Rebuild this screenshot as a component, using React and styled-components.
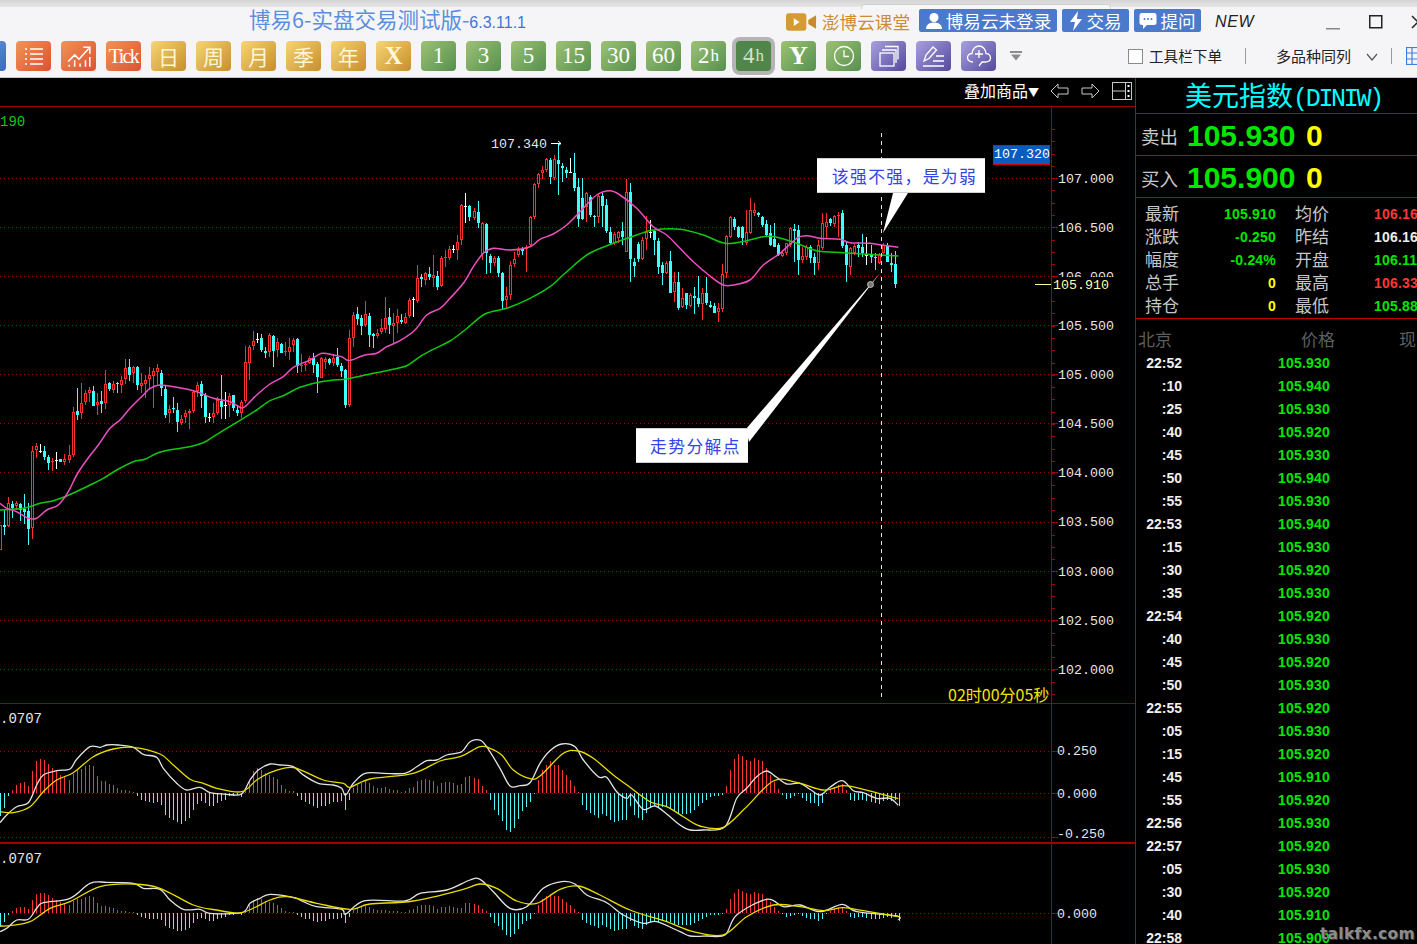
import React from "react";
import styled, { createGlobalStyle } from "styled-components";

const GlobalStyle = createGlobalStyle`
  html, body { margin: 0; padding: 0; background: #000; overflow: hidden; }
  * { box-sizing: border-box; }
`;

const CJK = `"Noto Sans CJK SC", "Liberation Sans", sans-serif`;
const MONO = `"Liberation Mono", "Noto Sans CJK SC", monospace`;
const SANS = `"Liberation Sans", "Noto Sans CJK SC", sans-serif`;
const SERIF = `"Liberation Serif", "Noto Sans CJK SC", serif`;

/* candles read off the chart: [kind, bodyTop, bodyBottom, high, low], kind 0 up, 1 down, 2 doji.
   y values are 3x zoom units, screen y = 130 + v / 3 */
const CANDLES = [
  [0,1185,1260,1185,1260],[1,1185,1190,1140,1215],[0,1120,1188,1100,1190],[1,1122,1135,1112,1165],[0,1118,1128,1112,1140],[1,1122,1140,1118,1172],[1,1136,1146,1092,1182],[1,1142,1196,1120,1244],[0,962,1195,948,1228],[0,948,960,938,985],
  [2,962,963,942,968],[1,964,980,948,990],[1,982,998,975,1020],[0,992,994,985,1022],[2,990,991,966,1016],[1,987,995,987,995],[0,988,996,972,1006],[0,975,990,945,998],[0,847,974,830,980],[1,843,855,775,870],
  [0,820,850,760,868],[0,790,815,780,825],[0,780,788,770,815],[1,783,827,768,828],[0,816,826,790,855],[1,812,822,782,850],[0,762,818,720,838],[1,760,776,757,782],[0,762,780,752,790],[1,760,762,757,790],
  [0,750,765,738,788],[0,714,746,686,762],[1,711,735,687,752],[0,712,730,708,760],[1,711,765,708,780],[0,760,768,730,790],[0,750,762,735,805],[0,735,746,710,780],[0,724,738,715,835],[0,714,726,703,765],
  [1,728,773,720,798],[1,777,855,765,863],[0,838,850,825,878],[1,835,837,800,850],[1,840,875,820,905],[0,868,878,855,885],[0,848,860,840,880],[0,843,848,838,898],[0,785,842,780,848],[0,766,782,755,800],
  [1,762,798,753,835],[1,795,860,790,880],[2,860,861,850,876],[0,848,862,820,878],[0,810,848,800,855],[1,812,830,735,868],[2,826,827,785,868],[0,798,825,790,860],[1,796,835,794,842],[1,840,850,825,858],
  [0,817,850,810,865],[0,697,812,648,818],[0,652,700,645,750],[0,633,647,603,660],[2,628,629,608,640],[1,625,660,612,665],[1,663,668,650,683],[0,616,665,610,680],[1,618,662,615,710],[0,637,660,625,680],
  [1,642,668,638,670],[0,664,666,636,678],[0,650,665,625,690],[0,630,645,625,665],[1,627,708,625,728],[0,705,708,672,725],[0,702,706,695,722],[0,685,700,678,702],[1,684,704,670,728],[1,702,742,695,788],
  [0,685,743,680,745],[0,687,695,680,718],[1,687,700,685,705],[0,685,700,672,708],[1,680,706,655,710],[1,708,722,700,740],[1,720,826,718,833],[0,625,826,600,830],[0,555,623,545,650],[1,552,567,532,585],
  [1,565,587,555,615],[0,552,585,513,590],[1,558,615,550,650],[1,612,618,608,653],[0,610,617,598,625],[0,595,606,568,612],[0,565,596,502,610],[1,561,585,533,612],[0,580,587,548,640],[0,558,580,537,608],
  [1,570,576,552,582],[0,562,578,548,582],[0,510,557,505,565],[2,508,509,502,562],[0,445,513,405,518],[1,440,446,433,470],[0,430,450,425,465],[1,433,441,410,450],[0,435,443,375,470],[1,438,470,423,480],
  [0,384,467,378,470],[0,380,382,360,410],[0,358,385,348,390],
  [2,358,359,345,370],[0,335,360,315,390],[0,225,330,222,345],[2,228,229,188,280],[1,228,262,226,272],[0,243,263,235,270],[1,246,278,213,295],[0,278,372,275,390],[1,282,370,280,432],[1,378,398,372,430],
  [0,385,398,378,408],[1,385,428,378,440],[1,428,512,425,540],[0,498,510,470,535],[0,405,495,393,510],[0,388,402,365,410],[0,360,375,350,380],[1,358,362,352,375],[0,350,358,345,425],[0,260,345,258,350],
  [0,162,262,160,268],[0,132,163,128,175],[0,120,130,108,148],[0,87,120,83,125],[1,90,142,85,163],[0,88,143,75,150],[1,90,103,38,195],[1,107,115,100,155],[1,120,128,112,145],[2,127,128,85,128],
  [1,130,175,70,182],[1,170,268,145,290],[1,205,268,145,270],[0,190,230,185,275],[1,202,255,195,260],[1,258,262,255,290],[0,197,260,190,280],[1,197,228,190,290],[1,225,302,208,310],[1,305,340,290,345],
  [0,313,340,305,345],[0,305,325,302,340],[1,302,320,275,345],[0,185,365,148,365],[1,187,388,160,455],[1,395,408,385,442],[1,343,388,335,395],[0,330,388,320,390],[0,305,328,258,360],[2,305,306,270,325],
  [1,303,330,300,375],[1,332,412,325,432],[1,405,430,395,465],[0,398,430,392,432],[1,393,488,362,490],[0,455,485,425,515],[1,456,535,425,540],[0,505,530,475,535],[1,490,525,488,538],[0,495,527,490,530],
  [1,497,505,470,552],[1,505,522,438,530],[0,490,522,475,570],[1,490,518,440,525],[1,525,530,512,535],[1,528,548,520,550],[0,535,545,518,575],[0,432,538,403,545],[0,318,430,315,445],[0,262,320,258,325],
  [1,268,292,262,300],[1,292,322,288,325],[1,290,325,288,345],[0,305,340,240,345],[0,240,310,205,312],[0,240,250,218,258],[1,250,255,245,262],[1,262,285,258,290],[1,282,315,270,318],[1,310,345,285,348],
  [1,328,350,280,352],[1,345,375,340,378],[0,368,378,360,382],[0,340,370,338,375],[0,295,345,290,350],[1,298,302,282,395],[1,300,390,285,435],[0,378,390,350,400],[0,350,380,345,390],[1,350,385,345,398],
  [1,382,400,370,435],[0,345,400,330,420],[0,280,355,250,360],[0,275,290,250,325],[1,268,280,265,288],[0,258,283,255,290],[0,255,258,245,320],[1,248,348,240,355],[1,345,405,335,455],[0,355,412,350,435],
  [0,348,368,342,375],[1,345,355,335,380],[1,350,368,312,380],[2,372,378,322,405],[1,375,380,345,400],[1,382,385,370,420],[0,372,400,370,402],[0,345,370,340,372],[1,348,395,340,395],[1,400,405,370,425],[1,402,462,362,473],
];

const scaleY = (v) => 130 + v / 3;

const PINK = [
  [0,[[0,1120],[20,1135],[50,1145],[85,1165],[110,1165],[140,1140],[175,1125],[205,1085],[230,1035],[260,990],[295,945],[330,895],[360,870],[390,835],[430,795],[450,775],[480,765],[530,772],[590,785],[640,805],[690,815],[720,832],[735,830],[770,795],[810,762],[850,740],[880,712],[930,690],[965,670],[1000,675],[1025,680],[1040,690],[1055,690],[1095,675],[1130,670],[1160,650],[1200,632],[1245,600],[1280,555],[1320,535],[1350,505]]],
  [450,[[40,460],[70,410],[100,370],[130,355],[180,360],[240,350],[270,328],[310,312],[350,285],[395,240],[440,195],[480,182],[510,195],[560,235],[610,290],[650,315],[690,355],[730,395],[780,438],[820,465],[850,465],[900,450],[940,405],[990,370],[1040,325],[1070,317],[1110,325],[1170,328],[1200,338],[1260,340],[1300,346],[1345,352]]],
];
const GREEN = [
  [0,[[0,1140],[70,1135],[120,1120],[160,1112],[200,1098],[260,1070],[310,1045],[350,1020],[400,995],[435,988],[475,968],[520,958],[560,952],[610,938],[640,920],[680,895],[730,865],[770,840],[810,812],[850,797],[900,772],[950,758],[1000,750],[1040,747],[1120,730],[1160,722],[1220,707],[1260,680],[1300,658],[1350,633]]],
  [450,[[45,600],[105,552],[170,535],[240,505],[300,470],[350,425],[415,372],[490,340],[560,315],[610,300],[690,298],[760,315],[825,340],[890,332],[940,320],[975,320],[1040,340],[1100,362],[1180,368],[1240,372],[1345,378]]],
];
const HIST = [
  -70,-45,-8,8,25,30,32,20,65,95,102,100,88,75,65,55,52,40,58,68,72,80,85,82,50,35,35,28,25,15,10,10,6,4,-10,-20,-25,-28,-30,-28,-35,-65,-75,-80,-88,-92,-85,-75,-52,-32,-25,-30,-38,-38,-30,-25,-20,-10,-8,-6,-12,5,40,65,75,70,60,55,48,42,25,12,6,6,-8,-22,-28,-32,-40,-45,-40,-38,-32,-28,-28,-25,-50,-20,15,25,30,35,30,22,15,15,17,12,10,10,4,5,15,18,35,38,42,38,35,22,30,32,33,30,25,27,48,52,45,42,
  22,8,-20,-50,-65,-85,-110,-118,-105,-78,-55,-42,-28,-2,38,68,85,95,85,85,70,55,38,22,2,-35,-50,-60,-65,-75,-62,-68,-80,-88,-85,-80,-80,-40,-65,-75,-80,-60,-45,-40,-45,-42,-40,-45,-55,-60,-62,-62,-60,-50,-38,-30,-20,-12,-10,-10,-6,22,68,102,118,112,100,97,105,100,95,75,55,32,12,-5,-18,-15,-8,-2,-15,-25,-30,-30,-38,-30,-2,12,18,25,28,8,-22,-25,-22,-22,-25,-28,-30,-32,-25,-22,-25,-20,-38,
];
const UPPER_WHITE = [
  [0,[[0,368],[20,345],[50,320],[85,308],[110,255],[130,225],[170,212],[210,207],[230,178],[270,140],[300,142],[320,135],[355,135],[400,142],[430,163],[470,172],[490,205],[530,250],[560,270],[600,262],[630,278],[680,283],[725,282],[750,240],[775,210],[810,192],[840,195],[880,200],[910,225],[955,250],[1000,255],[1025,265],[1037,285],[1060,250],[1095,220],[1150,220],[1215,220],[1250,200],[1280,182],[1310,180],[1340,165],[1385,155],[1410,125],[1440,120]]],
  [480,[[20,140],[60,205],[90,258],[120,257],[150,248],[180,190],[210,152],[245,132],[285,140],[310,180],[355,230],[380,232],[410,275],[440,295],[455,285],[490,328],[525,318],[560,342],[600,375],[630,390],[670,390],[735,380],[770,295],[800,265],[830,230],[860,213],[890,232],[920,252],[960,250],[990,268],[1020,285],[1050,262],[1087,242],[1120,272],[1150,278],[1190,295],[1230,295],[1255,316]]],
];
const UPPER_YELLOW = [
  [0,[[0,335],[40,338],[90,320],[130,275],[170,240],[220,218],[280,170],[340,147],[400,142],[480,162],[520,195],[570,238],[610,250],[650,265],[725,275],[770,240],[810,218],[850,205],[890,205],[970,240],[1030,250],[1050,262],[1110,237],[1240,220],[1320,183],[1380,170],[1440,140]]],
  [480,[[30,145],[65,165],[100,210],[150,236],[180,228],[250,160],[295,153],[340,175],[400,225],[450,262],[510,305],[560,320],[610,350],[660,378],[730,382],[800,320],[880,243],[950,247],[1030,270],[1090,257],[1150,268],[1255,296]]],
];
const LOWER_WHITE = [
  [0,[[0,695],[20,685],[50,660],[85,658],[110,625],[130,608],[210,595],[270,550],[320,547],[400,550],[430,565],[480,568],[510,600],[550,628],[600,628],[630,640],[725,638],[750,610],[780,595],[810,583],[880,592],[910,605],[950,620],[1025,628],[1037,642],[1095,602],[1215,603],[1260,580],[1340,570],[1410,540],[1440,538]]],
  [480,[[40,575],[90,625],[140,620],[190,565],[245,545],[285,552],[320,585],[380,608],[430,645],[490,670],[530,665],[600,695],[630,708],[680,708],[735,705],[770,645],[860,598],[910,620],[960,615],[1020,635],[1087,613],[1130,635],[1250,648],[1255,660]]],
];
const LOWER_YELLOW = [
  [0,[[0,678],[30,677],[90,665],[150,625],[210,605],[300,560],[400,552],[480,565],[580,615],[650,630],[725,638],[810,600],[860,590],[950,610],[1050,628],[1110,612],[1240,603],[1390,568],[1440,552]]],
  [480,[[50,565],[110,603],[170,610],[240,568],[295,558],[360,585],[450,630],[560,665],[640,695],[730,705],[800,650],[880,615],[960,620],[1030,632],[1090,623],[1150,632],[1255,650]]],
];

// catmull-rom through the picked points so the averages don't look polygonal
const toPath = (parts, toY) => {
  const pts = parts.flatMap(([ox, list]) => list.map(([x, y]) => [ox + x / 3, toY(y)]));
  let d = `M${pts[0][0].toFixed(1)} ${pts[0][1].toFixed(1)}`;
  for (let i = 0; i < pts.length - 1; i++) {
    const p0 = pts[Math.max(i - 1, 0)];
    const p1 = pts[i];
    const p2 = pts[i + 1];
    const p3 = pts[Math.min(i + 2, pts.length - 1)];
    const c1 = [p1[0] + (p2[0] - p0[0]) / 6, p1[1] + (p2[1] - p0[1]) / 6];
    const c2 = [p2[0] - (p3[0] - p1[0]) / 6, p2[1] - (p3[1] - p1[1]) / 6];
    d += `C${c1[0].toFixed(1)} ${c1[1].toFixed(1)} ${c2[0].toFixed(1)} ${c2[1].toFixed(1)} ${p2[0].toFixed(1)} ${p2[1].toFixed(1)}`;
  }
  return d;
};

const candleX = (i) => Math.round(0.33 + i * 4.01);

const PRICE_GRID = [0, 1, 2, 3, 4, 5, 6, 7, 8, 9, 10].map((i) => Math.round(177.5 + i * 49.15) + 0.5);
const PRICE_LABELS = [
  ["107.000", 178], ["106.500", 227], ["105.500", 325], ["105.000", 374], ["104.500", 423],
  ["104.000", 472], ["103.500", 521], ["103.000", 571], ["102.500", 620], ["102.000", 669],
];

const Page = styled.div`
  position: relative;
  width: 1417px;
  height: 944px;
  overflow: hidden;
  display: flex;
  flex-direction: column;
  background: #000;
`;

const TopStrip = styled.div`
  flex: none;
  height: 7px;
  background: linear-gradient(#d4d4d4, #e6e6e6);
  position: relative;
`;

const TabBump = styled.div`
  position: absolute;
  left: 861px;
  top: 4px;
  width: 250px;
  height: 5px;
  background: #f7f7f7;
  border-radius: 4px 4px 0 0;
  border: 1px solid #d0d0d0;
  border-bottom: none;
`;

const TitleBar = styled.div`
  flex: none;
  height: 30px;
  background: #f5f5f7;
  display: flex;
  align-items: center;
  padding-left: 249px;
  white-space: nowrap;
`;

const AppTitle = styled.div`
  flex: none;
  width: 537px;
  margin-top: -2px;
  font: 21.5px/26px ${CJK};
  color: #5b8fdc;
  span {
    font: 16px/26px ${SANS};
    color: #3f74d6;
  }
`;

const CourseLink = styled.div`
  flex: none;
  display: flex;
  align-items: center;
  gap: 5px;
  width: 133px;
  font: 17.6px/24px ${CJK};
  color: #cc8d31;
`;

const CloudButton = styled.div`
  flex: none;
  display: flex;
  align-items: center;
  justify-content: center;
  gap: 3px;
  width: ${(p) => p.$width}px;
  height: 23px;
  margin-right: 5px;
  margin-top: -3px;
  border-radius: 2px;
  background: #4b79cc;
  color: #fff;
  font: 17.6px/23px ${CJK};
`;

const NewTag = styled.div`
  flex: none;
  width: 111px;
  margin-left: 9px;
  font: italic 16px/24px ${SANS};
  letter-spacing: 0.6px;
  color: #222;
`;

const WindowButton = styled.svg`
  flex: none;
  width: 14px;
  height: 14px;
  margin-right: 29px;
  overflow: visible;
`;

const Toolbar = styled.div`
  flex: none;
  height: 41px;
  background: #f5f5f7;
  border-bottom: 1px solid #c8c8c8;
  display: flex;
  align-items: flex-start;
  padding-top: 4px;
  padding-left: 16px;
  gap: 10px;
  white-space: nowrap;
`;

const TONES = {
  blue: "#6f9be4, #3c68c0",
  orange: "#f09457, #de5131",
  gold: "#f6d674, #c78e2b",
  green: "#9dc272, #56904f",
  purple: "#a9a0e0, #54499c",
};

const ToolButton = styled.div`
  flex: none;
  width: 35px;
  height: 30px;
  border-radius: 4px;
  display: flex;
  align-items: center;
  justify-content: center;
  background: ${(p) => (p.$selected ? "#50864a" : `linear-gradient(135deg, ${TONES[p.$tone]})`)};
  box-shadow: ${(p) => (p.$selected ? "0 0 0 4px #b4b4b4" : "none")};
  color: ${(p) => (p.$selected ? "#d5e2ca" : p.$tone === "gold" ? "#fff6d8" : "#fff")};
  font-family: ${(p) => (p.$serif ? SERIF : CJK)};
  font-size: ${(p) => p.$size || 22}px;
  font-weight: ${(p) => (p.$bold ? 700 : 400)};
  letter-spacing: ${(p) => p.$spacing || 0}px;
  margin-left: ${(p) => p.$offset || 0}px;
  small { font-size: 17px; margin-left: 1px; }
`;

const ToolCaret = styled.svg`
  flex: none;
  width: 12px;
  height: 10px;
  margin: 10px 0 0 4px;
`;

const ToolOptions = styled.div`
  flex: none;
  display: flex;
  align-items: center;
  height: 30px;
  margin-left: 96px;
  color: #222;
  font: 14.6px/20px ${CJK};
`;

const CheckBox = styled.div`
  flex: none;
  width: 15px;
  height: 15px;
  margin-right: 6px;
  border: 1px solid #8a8a8a;
  background: #fff;
`;

const OptionDivider = styled.div`
  flex: none;
  width: 1px;
  height: 16px;
  margin: 0 ${(p) => p.$after}px 0 ${(p) => p.$before}px;
  background: #9a9a9a;
`;

const ListedText = styled.span`
  font-size: 15px;
`;

const Chevron = styled.svg`
  flex: none;
  margin: 2px 0 0 15px;
`;

const Workspace = styled.div`
  flex: 1;
  display: flex;
  min-height: 0;
`;

const ChartColumn = styled.div`
  position: relative;
  width: 1135px;
  flex: none;
  display: flex;
  flex-direction: column;
`;

const ChartHeader = styled.div`
  flex: none;
  height: 28px;
  display: flex;
  align-items: center;
  justify-content: flex-end;
  padding: 0 3px 2px 0;
  gap: 12px;
  color: #fff;
  font: 16px/22px ${CJK};
`;

const OverlayPicker = styled.div`
  margin-right: -1px;
  span { font-size: 11px; }
`;

const Pane = styled.div`
  position: relative;
  flex: none;
  height: ${(p) => p.$height}px;
  border-top: ${(p) => p.$rule || 1}px solid #a00000;
  svg { display: block; }
`;

const AxisText = styled.text`
  font: 13.3px ${MONO};
  fill: ${(p) => p.$fill || "#e6e6e6"};
`;

const Callout = styled.div`
  position: absolute;
  left: ${(p) => p.$left}px;
  top: ${(p) => p.$top}px;
  width: ${(p) => p.$width}px;
  height: ${(p) => p.$height}px;
  display: flex;
  align-items: center;
  justify-content: center;
  padding-left: 7px;
  background: #fff;
  border-top: 1px solid #d0d0d0;
  border-bottom: 1px solid #d0d0d0;
  color: #3344e6;
  font: 16.8px/20px ${CJK};
  letter-spacing: 1.4px;
`;

const PriceTag = styled.div`
  position: absolute;
  left: 993px;
  top: 38px;
  width: 57px;
  height: 20px;
  background: #0a5cc0;
  border: 1px solid #e00000;
  color: #fff;
  font: 13.3px/18px ${MONO};
  text-align: center;
`;

const Countdown = styled.div`
  position: absolute;
  left: 948px;
  top: 577px;
  color: #f4e400;
  font: 16px/20px ${CJK};
  white-space: nowrap;
`;

const PeriodLabel = styled.div`
  position: absolute;
  left: 0;
  top: 6px;
  color: ${(p) => p.$color || "#e6e6e6"};
  font: 14px/18px ${MONO};
`;

const QuotePanel = styled.div`
  flex: 1;
  min-width: 0;
  border-left: 1px solid #c40000;
  display: flex;
  flex-direction: column;
  background: #000;
  overflow: hidden;
  white-space: nowrap;
`;

const QuoteTitle = styled.div`
  flex: none;
  height: 36px;
  padding-left: 49px;
  border-bottom: 1px solid #c40000;
  color: #00ffff;
  font: 27px/34px ${CJK};
  span {
    font: 25px/25px ${MONO};
    letter-spacing: -2.3px;
  }
`;

const PriceRow = styled.div`
  flex: none;
  height: 42px;
  display: flex;
  align-items: center;
  padding: 3px 0 0 5px;
  border-bottom: 1px solid #c40000;
`;

const PriceLabel = styled.div`
  flex: none;
  width: 46px;
  color: #c9c9c9;
  font: 18.5px/24px ${CJK};
`;

const BigPrice = styled.div`
  flex: none;
  width: 119px;
  color: #00e600;
  font: 700 30px/36px ${SANS};
`;

const BigLots = styled.div`
  flex: none;
  color: #ffff00;
  font: 700 30px/36px ${SANS};
`;

const Stats = styled.div`
  flex: none;
  height: 121px;
  padding-top: 4px;
  border-bottom: 1px solid #c40000;
`;

const StatRow = styled.div`
  height: 23px;
  display: flex;
  align-items: center;
  padding-left: 9px;
`;

const StatLabel = styled.div`
  flex: none;
  width: 35px;
  margin: -2px 0 0 ${(p) => p.$offset || 0}px;
  color: #c4c8cc;
  font: 17px/23px ${CJK};
`;

const TONE_COLORS = { green: "#00e600", red: "#ff3636", white: "#ececec", yellow: "#ffff00" };

const StatValue = styled.div`
  flex: none;
  width: ${(p) => p.$width}px;
  margin: 1px 0 0 ${(p) => p.$offset || 0}px;
  text-align: ${(p) => (p.$right ? "right" : "left")};
  color: ${(p) => TONE_COLORS[p.$tone]};
  font: 700 14px/23px ${SANS};
  letter-spacing: 0.2px;
`;

const TickHead = styled.div`
  flex: none;
  height: 33px;
  display: flex;
  align-items: flex-end;
  padding: 0 0 3px 2px;
  color: #5e5e5e;
  font: 17px/20px ${CJK};
`;

const TickHeadCell = styled.div`
  width: ${(p) => p.$width}px;
  flex: none;
`;

const TickRow = styled.div`
  height: 23px;
  flex: none;
  display: flex;
  align-items: center;
  padding-left: 9px;
  font: 700 14px/23px ${SANS};
`;

const TickTime = styled.div`
  flex: none;
  width: 37px;
  text-align: right;
  color: #f0f0f0;
`;

const TickPrice = styled.div`
  flex: none;
  width: 148px;
  text-align: right;
  color: #00e600;
  letter-spacing: 0.2px;
`;

const Watermark = styled.div`
  position: absolute;
  right: 2px;
  bottom: 0;
  color: #8c8c8c;
  font: 700 15.5px/20px "DejaVu Sans", ${SANS};
  letter-spacing: 0.3px;
  text-shadow: 1px 1px 0 #3c3c3c;
`;

const Candle = ({ x, kind, top, bottom, high, low }) => {
  const t = Math.round(scaleY(top));
  const b = Math.max(Math.round(scaleY(bottom)), t + 1);
  const h = Math.round(scaleY(high));
  const l = Math.round(scaleY(low));
  const color = kind === 0 ? "#ff3030" : kind === 1 ? "#40ffff" : "#fff";
  return (
    <g fill={color}>
      <rect x={x} y={h} width={1} height={Math.max(l - h, 1)} />
      <rect x={x - 1} y={t} width={3} height={b - t} />
      {kind === 0 && b - t > 2 && <rect x={x} y={t + 1} width={1} height={b - t - 2} fill="#000" />}
    </g>
  );
};

const DotLine = ({ y }) => (
  <line x1={0} x2={1051} y1={y} y2={y} stroke="#a00000" strokeDasharray="1 3" />
);

const AxisLine = ({ from, to }) => (
  <rect x={1051} y={from} width={1} height={to - from} fill="#a00000" />
);

const Tick = ({ y, long }) => (
  <rect x={1052} y={y} width={long ? 6 : 3} height={1} fill="#a00000" />
);

const PriceChart = () => {
  const minor = [];
  for (let y = 129; y < 700; y += 12.29) minor.push(Math.round(y));
  return (
    <svg width={1135} height={596} viewBox="0 107 1135 596" shapeRendering="crispEdges">
      {PRICE_GRID.map((y) => <DotLine key={y} y={y} />)}
      <AxisLine from={107} to={703} />
      {minor.map((y) => <Tick key={y} y={y} />)}
      {PRICE_GRID.map((y) => <Tick key={y} y={y - 0.5} long />)}

      {CANDLES.map(([kind, top, bottom, high, low], i) => (
        <Candle key={i} x={candleX(i)} kind={kind} top={top} bottom={bottom} high={high} low={low} />
      ))}
      <g fill="none" strokeWidth={1.5} shapeRendering="auto">
        <path d={toPath(GREEN, scaleY)} stroke="#10c810" />
        <path d={toPath(PINK, scaleY)} stroke="#ee4fc0" />
      </g>

      <line x1={881.5} x2={881.5} y1={133} y2={701} stroke="#e0e0e0" strokeDasharray="4 4" />
      <g shapeRendering="auto">
        <polygon points="893,193 908,193 883,233" fill="#fff" />
        <polygon points="881,272 746,429 749,442" fill="#fff" />
        <circle cx={870.5} cy={284.5} r={3} fill="#777" stroke="#bbb" />
      </g>

      <AxisText x={491} y={148}>107.340</AxisText>
      <path d="M551 143.5h10M558 141l3 2.5-3 2.5" stroke="#fff" fill="none" shapeRendering="auto" />

      {PRICE_LABELS.map(([text, y]) => (
        <AxisText key={text} x={1058} y={y + 5}>{text}</AxisText>
      ))}
      <AxisText x={1058} y={281}>106.000</AxisText>
      <rect x={1052} y={277} width={62} height={17} fill="#000" />
      <rect x={1035} y={284} width={16} height={1} fill="#ffffa0" />
      <AxisText x={1053} y={289} $fill="#ffffa0">105.910</AxisText>
    </svg>
  );
};

const Histogram = ({ zero, scale }) =>
  HIST.map((v, i) => {
    const len = Math.max(Math.round((Math.abs(v) / 3) * scale), 1);
    return (
      <rect
        key={i}
        x={candleX(i)}
        y={v > 0 ? zero - len : zero}
        width={1}
        height={len}
        fill={v > 0 ? "#ff3636" : "#55f5ff"}
      />
    );
  });

const IndicatorChart = ({ top, height, zero, scale, rows, labels, white, yellow }) => {
  const toY = (v) => 700 + v / 3;
  return (
    <svg width={1135} height={height} viewBox={`0 ${top} 1135 ${height}`} shapeRendering="crispEdges">
      {rows.map((y) => <DotLine key={y} y={y + 0.5} />)}
      <AxisLine from={top} to={top + height} />
      {rows.map((y) => <Tick key={y} y={y} long />)}
      <Histogram zero={zero} scale={scale} />
      <g fill="none" strokeWidth={1.3} shapeRendering="auto">
        <path d={toPath(white, toY)} stroke="#e4e4e4" />
        <path d={toPath(yellow, toY)} stroke="#e8dc00" />
      </g>
      {labels.map(([text, y]) => (
        <AxisText key={text} x={1057} y={y + 5}>{text}</AxisText>
      ))}
    </svg>
  );
};

const STATS = [
  ["最新", "105.910", "green", "均价", "106.16", "red"],
  ["涨跌", "-0.250", "green", "昨结", "106.16", "white"],
  ["幅度", "-0.24%", "green", "开盘", "106.11", "green"],
  ["总手", "0", "yellow", "最高", "106.33", "red"],
  ["持仓", "0", "yellow", "最低", "105.88", "green"],
];

const TICKS = [
  ["22:52", "105.930"], [":10", "105.940"], [":25", "105.930"], [":40", "105.920"], [":45", "105.930"],
  [":50", "105.940"], [":55", "105.930"], ["22:53", "105.940"], [":15", "105.930"], [":30", "105.920"],
  [":35", "105.930"], ["22:54", "105.920"], [":40", "105.930"], [":45", "105.920"], [":50", "105.930"],
  ["22:55", "105.920"], [":05", "105.930"], [":15", "105.920"], [":45", "105.910"], [":55", "105.920"],
  ["22:56", "105.930"], ["22:57", "105.920"], [":05", "105.930"], [":30", "105.920"], [":40", "105.910"],
  ["22:58", "105.900"],
];

const LABEL_BUTTONS = ["日", "周", "月", "季", "年"];
const PERIOD_BUTTONS = ["1", "3", "5", "15", "30", "60"];

const Stroke = ({ children, size = 24 }) => (
  <svg width={size} height={size} viewBox="0 0 24 24" fill="none" stroke="currentColor" strokeWidth="1.4">
    {children}
  </svg>
);

const App = () => (
  <Page>
    <GlobalStyle />
    <TopStrip><TabBump /></TopStrip>

    <TitleBar>
      <AppTitle>博易6-实盘交易测试版-<span>6.3.11.1</span></AppTitle>
      <CourseLink>
        <svg width="31" height="18" viewBox="0 0 32 18">
          <rect x="0" y="0" width="21" height="18" rx="3" fill="#d49a33" />
          <path d="M8 5l6 4-6 4z" fill="#fff" />
          <path d="M23 7l8-5v14l-8-5z" fill="#c98a2c" />
        </svg>
        澎博云课堂
      </CourseLink>
      <CloudButton $width={138}>
        <svg width="18" height="18" viewBox="0 0 18 18" fill="#fff">
          <circle cx="9" cy="5.5" r="4.5" />
          <path d="M1 17c0-4.5 3.5-6.5 8-6.5s8 2 8 6.5z" />
        </svg>
        博易云未登录
      </CloudButton>
      <CloudButton $width={67}>
        <svg width="14" height="20" viewBox="0 0 14 20" fill="#fff">
          <path d="M9 0L1 11h5l-2 9 9-12H8z" />
        </svg>
        交易
      </CloudButton>
      <CloudButton $width={67}>
        <svg width="18" height="18" viewBox="0 0 18 18" fill="#fff">
          <path d="M3 1h12a2.500 2.500 0 012.500 2.500v7A2.500 2.500 0 0115 13H8l-4 4v-4H3a2.500 2.500 0 01-2.500-2.500v-7A2.500 2.500 0 013 1z" />
          <g fill="#4b79cc"><circle cx="5.500" cy="7" r="1" /><circle cx="9" cy="7" r="1" /><circle cx="12.500" cy="7" r="1" /></g>
        </svg>
        提问
      </CloudButton>
      <NewTag>NEW</NewTag>
      <WindowButton viewBox="0 0 14 14"><rect x="0" y="13" width="14" height="1.500" fill="#888" /></WindowButton>
      <WindowButton viewBox="0 0 14 14"><rect x="0.750" y="0.750" width="12" height="12" fill="none" stroke="#222" strokeWidth="1.500" /></WindowButton>
      <WindowButton viewBox="0 0 14 14"><path d="M0 1l12 12M12 1L0 13" stroke="#222" strokeWidth="1.500" /></WindowButton>
    </TitleBar>

    <Toolbar>
      <ToolButton $tone="blue" $offset={-45} />
      <ToolButton $tone="orange">
        <Stroke>
          <path d="M3 5h2M8 5h13M3 10h2M8 10h13M3 15h2M8 15h13M3 20h2M8 20h13" />
        </Stroke>
      </ToolButton>
      <ToolButton $tone="orange">
        <Stroke size={26}>
          <path d="M2 17l6-6 4 4 9-10M16 4h6v6M3 22v-2M8 22v-6M13 22v-3M18 22v-6M22 22v-9" />
        </Stroke>
      </ToolButton>
      <ToolButton $tone="orange" $serif $size={20} $spacing={-1.6}>Tick</ToolButton>
      {LABEL_BUTTONS.map((text) => (
        <ToolButton key={text} $tone="gold" $size={21}>{text}</ToolButton>
      ))}
      <ToolButton $tone="gold" $serif $bold $size={25}>X</ToolButton>
      {PERIOD_BUTTONS.map((text) => (
        <ToolButton key={text} $tone="green" $serif $size={23}>{text}</ToolButton>
      ))}
      <ToolButton $tone="green" $serif $size={23}>2<small>h</small></ToolButton>
      <ToolButton $tone="green" $serif $selected $size={23}>4<small>h</small></ToolButton>
      <ToolButton $tone="green" $serif $bold $size={26}>Y</ToolButton>
      <ToolButton $tone="green">
        <svg width="24" height="24" viewBox="0 0 24 24" fill="none" stroke="#fff" strokeWidth="1.300">
          <circle cx="12" cy="12" r="9.500" />
          <path d="M12 6v6.500h5" />
        </svg>
      </ToolButton>
      <ToolButton $tone="purple">
        <svg width="24" height="24" viewBox="0 0 24 24" fill="none" stroke="#fff" strokeWidth="1.300">
          <rect x="3" y="9" width="14" height="13" />
          <path d="M7 5h14v13M10 1.500h13v13" transform="translate(-2 1)" />
        </svg>
      </ToolButton>
      <ToolButton $tone="purple">
        <svg width="26" height="24" viewBox="0 0 26 24" fill="none" stroke="#fff" strokeWidth="1.300">
          <path d="M3 17l2-6 7-8 3.500 3-7.500 8.500z" />
          <path d="M12 17h11M15 12h8M2 22h21" />
        </svg>
      </ToolButton>
      <ToolButton $tone="purple">
        <svg width="26" height="24" viewBox="0 0 26 24" fill="none" stroke="#fff" strokeWidth="1.300">
          <path d="M7 18c-3.500 0-5.500-2-5.500-4.500S4 9.500 6 9.500C6.500 5 9.500 2 13 2s6.500 3 7 7.500c2.500 0 4.500 2 4.500 4.500S22 18 19 18h-3l-3 4" />
          <path d="M13 6v8M9 10h8" />
        </svg>
      </ToolButton>
      <ToolCaret viewBox="0 0 12 10">
        <rect width="12" height="2" fill="#8c8c8c" />
        <path d="M1 3.500h10L6 9.500z" fill="#8c8c8c" />
      </ToolCaret>
      <ToolOptions>
        <CheckBox />
        工具栏下单
        <OptionDivider $before={23} $after={30} />
        <ListedText>多品种同列</ListedText>
        <Chevron width="12" height="8" viewBox="0 0 12 8" fill="none" stroke="#555" strokeWidth="1.200">
          <path d="M1 1l5 6 5-6" />
        </Chevron>
        <OptionDivider $before={13} $after={14} />
        <svg width="18" height="18" viewBox="0 0 18 18" fill="none" stroke="#3f7fe0" strokeWidth="1.200" style={{ flex: "none" }}>
          <rect x="0.500" y="0.500" width="17" height="17" />
          <path d="M0 6h18M0 12h18M6 0v18" />
        </svg>
      </ToolOptions>
    </Toolbar>

    <Workspace>
      <ChartColumn>
        <ChartHeader>
          <OverlayPicker>叠加商品<span>▼</span></OverlayPicker>
          <svg width="19" height="16" viewBox="0 0 19 16" fill="none" stroke="#c8c8c8">
            <path d="M1 8l7-7v4h10v6H8v4z" />
          </svg>
          <svg width="19" height="16" viewBox="0 0 19 16" fill="none" stroke="#c8c8c8">
            <path d="M18 8l-7-7v4H1v6h10v4z" />
          </svg>
          <svg width="20" height="18" viewBox="0 0 20 18" fill="none" stroke="#c8c8c8">
            <rect x="0.500" y="0.500" width="19" height="17" />
            <path d="M13.500 0v18M0 9h13.500" />
            <path d="M16.500 3v2M16.500 8v2M16.500 13v2" stroke="#fff" strokeWidth="2" />
          </svg>
        </ChartHeader>

        <Pane $height={597}>
          <PriceChart />
          <PeriodLabel $color="#10c810">190</PeriodLabel>
          <PriceTag>107.320</PriceTag>
          <Callout $left={817} $top={51} $width={168} $height={35}>该强不强，是为弱</Callout>
          <Callout $left={636} $top={321} $width={112} $height={35}>走势分解点</Callout>
          <Countdown>02时00分05秒</Countdown>
        </Pane>

        <Pane $height={139}>
          <IndicatorChart
            top={704}
            height={138}
            zero={793}
            scale={1}
            rows={[751, 793, 837]}
            labels={[["0.250", 750], ["0.000", 793], ["-0.250", 833]]}
            white={UPPER_WHITE}
            yellow={UPPER_YELLOW}
          />
          <PeriodLabel>.0707</PeriodLabel>
        </Pane>

        <Pane $height={102} $rule={2}>
          <IndicatorChart
            top={844}
            height={100}
            zero={913}
            scale={0.6}
            rows={[913]}
            labels={[["0.000", 913]]}
            white={LOWER_WHITE}
            yellow={LOWER_YELLOW}
          />
          <PeriodLabel>.0707</PeriodLabel>
        </Pane>
      </ChartColumn>

      <QuotePanel>
        <QuoteTitle>美元指数<span>(DINIW)</span></QuoteTitle>
        <PriceRow>
          <PriceLabel>卖出</PriceLabel>
          <BigPrice>105.930</BigPrice>
          <BigLots>0</BigLots>
        </PriceRow>
        <PriceRow>
          <PriceLabel>买入</PriceLabel>
          <BigPrice>105.900</BigPrice>
          <BigLots>0</BigLots>
        </PriceRow>
        <Stats>
          {STATS.map(([a, av, at, b, bv, bt]) => (
            <StatRow key={a}>
              <StatLabel>{a}</StatLabel>
              <StatValue $width={96} $right $tone={at}>{av}</StatValue>
              <StatLabel $offset={19}>{b}</StatLabel>
              <StatValue $width={60} $offset={44} $tone={bt}>{bv}</StatValue>
            </StatRow>
          ))}
        </Stats>
        <TickHead>
          <TickHeadCell $width={163}>北京</TickHeadCell>
          <TickHeadCell $width={98}>价格</TickHeadCell>
          <TickHeadCell $width={20}>现</TickHeadCell>
        </TickHead>
        {TICKS.map(([time, price], i) => (
          <TickRow key={i}>
            <TickTime>{time}</TickTime>
            <TickPrice>{price}</TickPrice>
          </TickRow>
        ))}
      </QuotePanel>
    </Workspace>
    <Watermark>talkfx.com</Watermark>
  </Page>
);

export default App;
